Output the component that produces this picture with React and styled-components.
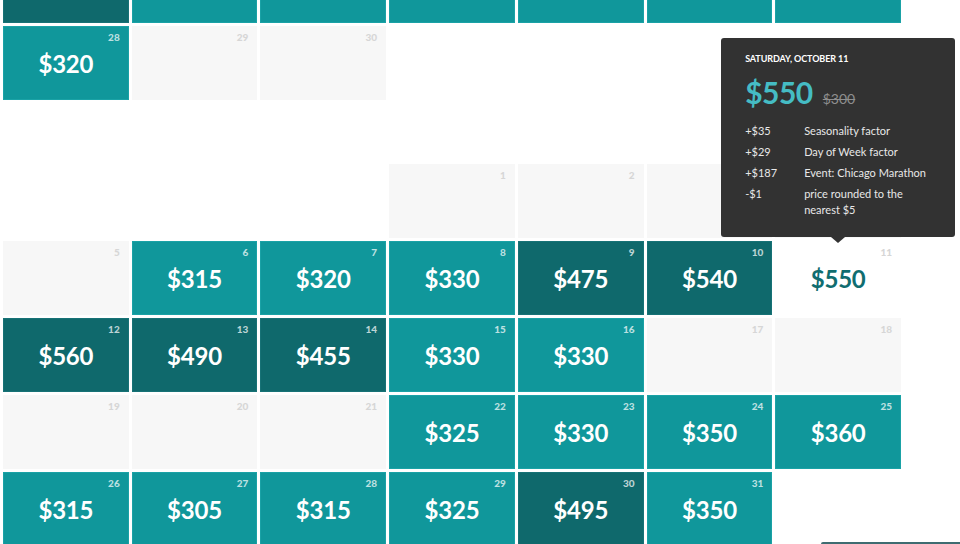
import React from 'react';
import styled, { createGlobalStyle } from 'styled-components';

const GlobalStyle = createGlobalStyle`
  html, body {
    margin: 0;
    padding: 0;
    background: #ffffff;
    overflow: hidden;
    font-family: Lato, "Open Sans", "Liberation Sans", sans-serif;
  }
`;

const Page = styled.div`
  width: 960px;
  height: 544px;
  overflow: hidden;
  position: relative;
`;

const Scroller = styled.div`
  margin-top: -51px;
  padding-left: 3px;
  width: 898px;
`;

const Month = styled.div`
  display: grid;
  grid-template-columns: repeat(7, 1fr);
  grid-auto-rows: 74px;
  gap: 3px;
  margin-bottom: ${p => p.$after || 0}px;
`;

const colors = {
  mid: '#10979b',
  high: '#0f696c',
  off: '#f7f7f7',
  selected: '#ffffff',
};

const Cell = styled.div`
  position: relative;
  box-sizing: border-box;
  background: ${p => colors[p.$kind]};
  border: 1px solid
    ${p =>
      p.$kind === 'mid'
        ? '#1aa2a6'
        : p.$kind === 'high'
        ? '#177276'
        : 'transparent'};
  display: flex;
  align-items: center;
  justify-content: center;
`;

const Empty = styled.div``;

const DayNum = styled.span`
  position: absolute;
  top: 4px;
  right: 8px;
  font-size: 10px;
  font-weight: 900;
  color: ${p =>
    p.$kind === 'off' || p.$kind === 'selected'
      ? '#d6d6d6'
      : 'rgba(255, 255, 255, 0.72)'};
`;

const Price = styled.span`
  font-size: 24px;
  font-weight: 700;
  letter-spacing: -0.2px;
  color: ${p => (p.$kind === 'selected' ? '#106d70' : '#ffffff')};
`;

const Tooltip = styled.div`
  position: absolute;
  bottom: calc(100% + 5px);
  left: 50%;
  transform: translateX(-50%);
  width: 234px;
  box-sizing: border-box;
  padding: 15px 20px 19px 24px;
  background: #323232;
  border-radius: 3px;
  color: #eeeeee;
  z-index: 5;

  &::after {
    content: '';
    position: absolute;
    top: 100%;
    left: 50%;
    margin-left: -7px;
    border-left: 7px solid transparent;
    border-right: 7px solid transparent;
    border-top: 6px solid #323232;
  }
`;

const TipDate = styled.div`
  font-size: 9px;
  font-weight: 700;
  text-transform: uppercase;
  letter-spacing: -0.1px;
  color: #ffffff;
`;

const TipPrices = styled.div`
  display: flex;
  align-items: baseline;
  gap: 10px;
  margin-top: 10px;
  margin-bottom: 13px;
`;

const TipPrice = styled.span`
  font-size: 30px;
  font-weight: 700;
  color: #45bcc4;
  letter-spacing: -0.5px;
`;

const TipOld = styled.span`
  font-size: 14px;
  color: #8e8e8e;
  text-decoration: line-through;
`;

const Factors = styled.div`
  display: grid;
  grid-template-columns: 59px 1fr;
  row-gap: 5px;
  font-size: 11px;
  line-height: 16px;
  color: #e8e8e8;
`;

const Amount = styled.span``;
const Label = styled.span``;

const BottomBar = styled.div`
  position: absolute;
  right: 0;
  bottom: 0;
  width: 139px;
  height: 2px;
  background: #3f6c71;
  border-radius: 2px 0 0 0;
`;

const september = [
  { kind: 'high' }, { kind: 'mid' }, { kind: 'mid' }, { kind: 'mid' }, { kind: 'mid' }, { kind: 'mid' }, { kind: 'mid' },
  { kind: 'mid', day: 28, price: 320 }, { kind: 'off', day: 29 }, { kind: 'off', day: 30 },
  null, null, null, null,
];

// days 3 and 4 sit under the tooltip, so their numbers are left out
const october = [
  null, null, null,
  { kind: 'off', day: 1 }, { kind: 'off', day: 2 }, { kind: 'off' }, { kind: 'off' },
  { kind: 'off', day: 5 }, { kind: 'mid', day: 6, price: 315 }, { kind: 'mid', day: 7, price: 320 },
  { kind: 'mid', day: 8, price: 330 }, { kind: 'high', day: 9, price: 475 }, { kind: 'high', day: 10, price: 540 },
  { kind: 'selected', day: 11, price: 550, tip: true },
  { kind: 'high', day: 12, price: 560 }, { kind: 'high', day: 13, price: 490 }, { kind: 'high', day: 14, price: 455 },
  { kind: 'mid', day: 15, price: 330 }, { kind: 'mid', day: 16, price: 330 }, { kind: 'off', day: 17 }, { kind: 'off', day: 18 },
  { kind: 'off', day: 19 }, { kind: 'off', day: 20 }, { kind: 'off', day: 21 }, { kind: 'mid', day: 22, price: 325 },
  { kind: 'mid', day: 23, price: 330 }, { kind: 'mid', day: 24, price: 350 }, { kind: 'mid', day: 25, price: 360 },
  { kind: 'mid', day: 26, price: 315 }, { kind: 'mid', day: 27, price: 305 }, { kind: 'mid', day: 28, price: 315 },
  { kind: 'mid', day: 29, price: 325 }, { kind: 'high', day: 30, price: 495 }, { kind: 'mid', day: 31, price: 350 },
  null,
];

const factors = [
  ['+$35', 'Seasonality factor'],
  ['+$29', 'Day of Week factor'],
  ['+$187', 'Event: Chicago Marathon'],
  ['-$1', 'price rounded to the nearest $5'],
];

const PriceTip = () => (
  <Tooltip>
    <TipDate>Saturday, October 11</TipDate>
    <TipPrices>
      <TipPrice>$550</TipPrice>
      <TipOld>$300</TipOld>
    </TipPrices>
    <Factors>
      {factors.map(([a, l]) => (
        <React.Fragment key={a}>
          <Amount>{a}</Amount>
          <Label>{l}</Label>
        </React.Fragment>
      ))}
    </Factors>
  </Tooltip>
);

const Day = ({ d }) => {
  if (!d) return <Empty />;
  return (
    <Cell $kind={d.kind}>
      {d.day && <DayNum $kind={d.kind}>{d.day}</DayNum>}
      {d.price && <Price $kind={d.kind}>${d.price}</Price>}
      {d.tip && <PriceTip />}
    </Cell>
  );
};

const App = () => (
  <Page>
    <GlobalStyle />
    <Scroller>
      <Month $after={64}>
        {september.map((d, i) => (
          <Day key={'s' + i} d={d} />
        ))}
      </Month>
      <Month>
        {october.map((d, i) => (
          <Day key={'o' + i} d={d} />
        ))}
      </Month>
    </Scroller>
    <BottomBar />
  </Page>
);

export default App;
